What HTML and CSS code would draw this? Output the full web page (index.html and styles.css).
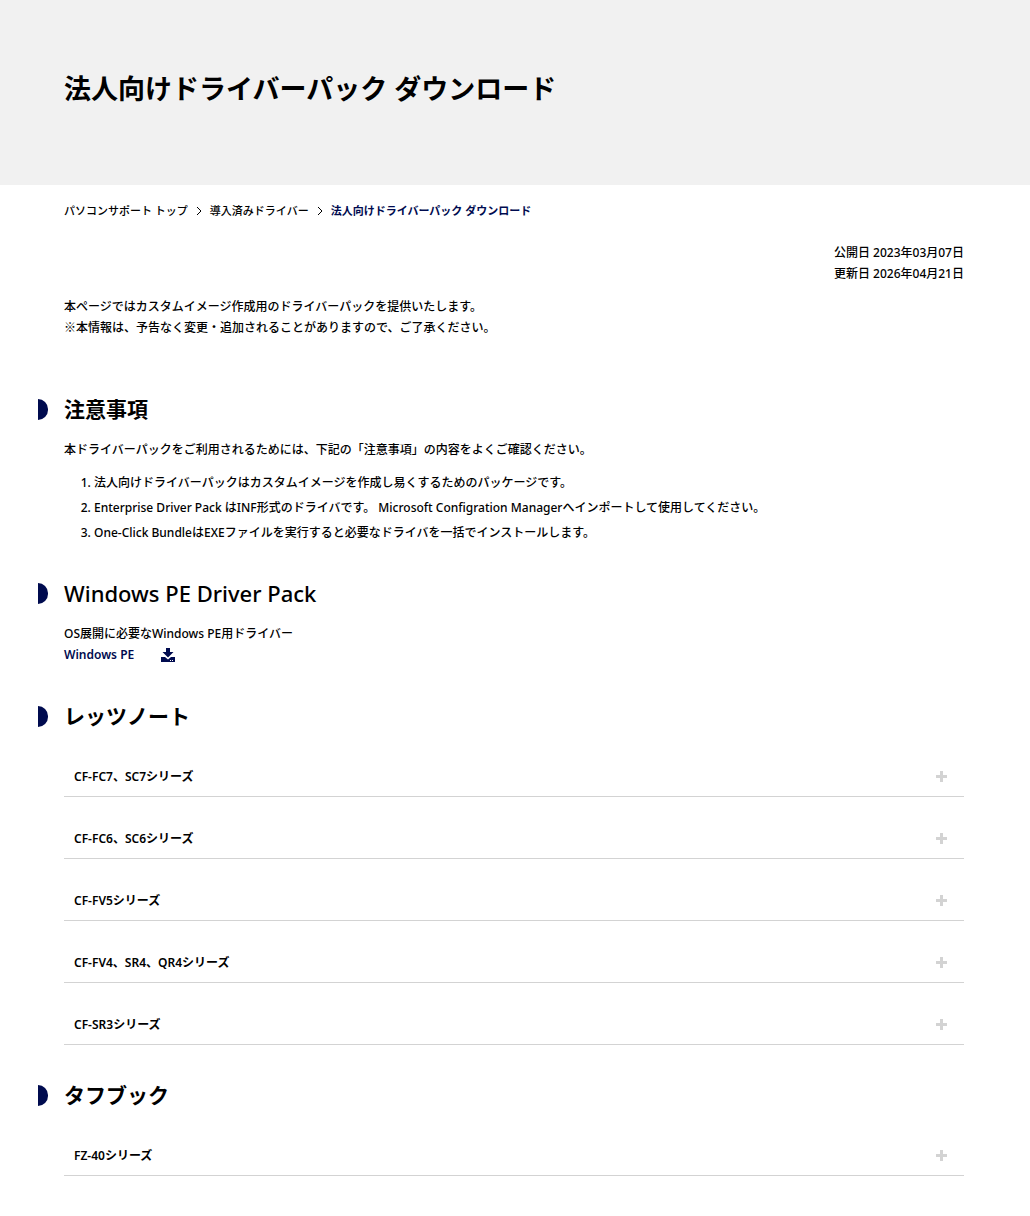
FILE: index.html
```html
<!DOCTYPE html>
<html lang="ja">
<head>
    <meta charset="UTF-8">
    <meta name="viewport" content="width=device-width, initial-scale=1.0">
    <title>法人向けドライバーパック ダウンロード</title>
    <link rel="stylesheet" href="styles.css">
</head>
<body>
    <header class="hero">
        <h1>法人向けドライバーパック ダウンロード</h1>
    </header>

    <main class="container">
        <nav class="breadcrumb" aria-label="パンくず">
            <a href="#">パソコンサポート トップ</a>
            <svg class="chevron" viewBox="0 0 6 10" aria-hidden="true"><path d="M1 1l4 4-4 4"/></svg>
            <a href="#">導入済みドライバー</a>
            <svg class="chevron" viewBox="0 0 6 10" aria-hidden="true"><path d="M1 1l4 4-4 4"/></svg>
            <span class="current" aria-current="page">法人向けドライバーパック ダウンロード</span>
        </nav>

        <p class="dates">公開日 2023年03月07日<br>更新日 2026年04月21日</p>

        <p class="intro">本ページではカスタムイメージ作成用のドライバーパックを提供いたします。<br>※本情報は、予告なく変更・追加されることがありますので、ご了承ください。</p>

        <section class="notes">
            <h2>注意事項</h2>
            <p>本ドライバーパックをご利用されるためには、下記の「注意事項」の内容をよくご確認ください。</p>
            <ol>
                <li>法人向けドライバーパックはカスタムイメージを作成し易くするためのパッケージです。</li>
                <li>Enterprise Driver Pack はINF形式のドライバです。 Microsoft Configration Managerへインポートして使用してください。</li>
                <li>One-Click BundleはEXEファイルを実行すると必要なドライバを一括でインストールします。</li>
            </ol>
        </section>

        <section class="winpe">
            <h2 lang="en">Windows PE Driver Pack</h2>
            <p>OS展開に必要なWindows PE用ドライバー</p>
            <a class="download" href="#">Windows PE
                <svg viewBox="0 0 14 14" aria-hidden="true"><path d="M5 0h4v4h3.500L7 9.500 1.500 4H5zM0 9h4l3 2.500L10 9h4v5H0z"/><path class="lights" d="M9 12h1v1H9zM11 12h1v1h-1z"/></svg>
            </a>
        </section>

        <section class="series">
            <h2>レッツノート</h2>
            <button type="button" aria-expanded="false">CF-FC7、SC7シリーズ<span class="plus"></span></button>
            <button type="button" aria-expanded="false">CF-FC6、SC6シリーズ<span class="plus"></span></button>
            <button type="button" aria-expanded="false">CF-FV5シリーズ<span class="plus"></span></button>
            <button type="button" aria-expanded="false">CF-FV4、SR4、QR4シリーズ<span class="plus"></span></button>
            <button type="button" aria-expanded="false">CF-SR3シリーズ<span class="plus"></span></button>
        </section>

        <section class="series">
            <h2>タフブック</h2>
            <button type="button" aria-expanded="false">FZ-40シリーズ<span class="plus"></span></button>
        </section>
    </main>
</body>
</html>
```
FILE: styles.css
```css
:root {
    --navy: #000b4f;
    --line: #d3d3d3;
}

* {
    box-sizing: border-box;
}

body {
    margin: 0;
    background: #fff;
    color: #000;
    font-family: "Noto Sans", "Noto Sans CJK JP", sans-serif;
    font-size: 12px;
    font-weight: 500;
    line-height: 21px;
}

h1, h2, p, ol {
    margin: 0;
}

a {
    color: inherit;
    text-decoration: none;
}

.hero {
    padding: 69px 64px 76px;
    background: #f1f1f1;
}

h1 {
    font-size: 27px;
    line-height: 40px;
    font-weight: 700;
}

.container {
    padding: 0 66px 40px 64px;
}

.breadcrumb {
    display: flex;
    align-items: center;
    gap: 8px;
    padding-top: 15px;
    font-size: 11px;
}

.chevron {
    width: 6px;
    height: 10px;
    fill: none;
    stroke: #000;
}

.current {
    color: var(--navy);
    font-weight: 700;
}

.dates {
    margin-top: 21px;
    text-align: right;
}

.intro {
    margin-top: 11px;
    font-family: "Noto Sans CJK JP", sans-serif;
}

h2 {
    display: flex;
    align-items: center;
    font-size: 21px;
    line-height: 32px;
    font-weight: 600;
}

h2:lang(en) {
    font-size: 22px;
    font-weight: 500;
}

/* half circle hanging in the left margin */
h2::before {
    content: "";
    width: 10px;
    height: 21px;
    margin: 0 16px 0 -26px;
    border-radius: 0 11px 11px 0;
    background: var(--navy);
}

.notes {
    margin-top: 56px;
}

.notes p, .winpe p {
    margin-top: 14px;
}

.notes ol {
    margin-top: 10px;
    padding-left: 30px;
    line-height: 25px;
}

.winpe {
    margin-top: 32px;
}

.download {
    display: flex;
    align-items: center;
    gap: 27px;
    line-height: 22px;
    color: var(--navy);
    font-weight: 600;
}

.download svg {
    width: 14px;
    height: 14px;
    fill: currentColor;
}

.download .lights {
    fill: #fff;
}

.series {
    margin-top: 34px;
}

.series h2 {
    margin-bottom: 3px;
}

.series button {
    display: flex;
    justify-content: space-between;
    align-items: center;
    width: 100%;
    height: 62px;
    padding: 22px 17px 0 10px;
    border: 0;
    border-bottom: 1px solid var(--line);
    background: none;
    color: inherit;
    font: inherit;
    font-weight: 600;
}

.plus {
    width: 11px;
    height: 11px;
    background:
        linear-gradient(var(--line), var(--line)) center / 11px 3px no-repeat,
        linear-gradient(var(--line), var(--line)) center / 3px 11px no-repeat;
}
```
